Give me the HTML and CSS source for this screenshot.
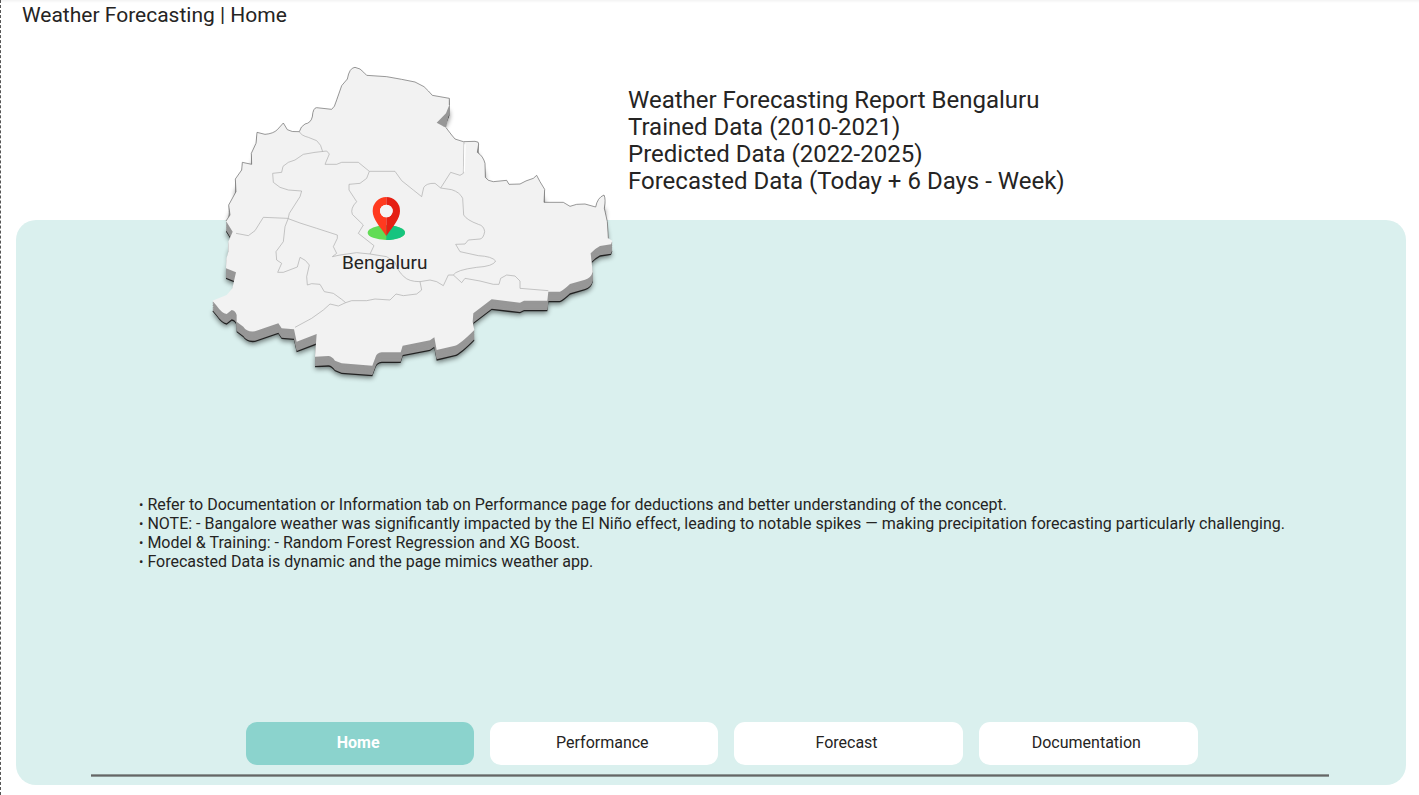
FILE: index.html
```html
<!DOCTYPE html>
<html lang="en">
<head>
<meta charset="utf-8">
<meta name="viewport" content="width=device-width, initial-scale=1">
<title>Weather Forecasting | Home</title>
<link rel="stylesheet" href="styles.css">
</head>
<body>
<div class="report">
  <header class="page-header">
    <h1 class="page-title">Weather Forecasting | Home</h1>
  </header>

  <section class="hero">
    <figure class="map">
      <svg class="map-art" viewBox="0 0 1260 990" aria-hidden="true">
        <defs>
          <path id="land" d="M465 37L480 42Q492 52 500 61L560 65L605 73L645 81L672 95Q686 108 697 121L748 130L748 150L738 175L710 203L738 218L755 240L765 252L790 260L825 259Q838 260 836 267L832 292Q850 304 855 325L856 367Q862 378 880 380L920 376L927 388L960 387Q976 377 1000 370L1010 361L1020 380L1034 403L1032 442L1090 442L1110 454L1130 448L1155 447L1187 456Q1192 428 1212 420Q1218 432 1213 460L1222 500L1225 550L1237 557L1233 568L1200 573Q1186 580 1172 595L1178 650Q1174 668 1155 674L1110 687Q1092 704 1080 710L1045 710L1042 737L972 737L960 743L875 733L820 775L818 800L823 825Q780 868 765 872L710 885L703 847L690 856L608 872L602 892L545 892Q530 894 527 905L517 932L425 925L405 917Q395 903 385 903L345 905L350 837L290 860L282 823L245 820L235 805L165 829Q140 832 130 815L110 800L110 780Q106 766 95 765L80 777Q65 774 50 752L37 737L80 720L97 700L108 652L78 640L79 612L85 590L85 560L98 530L78 498L90 480L86 450L108 410L106 372L125 345L127 322L155 328L154 295L168 265L171 232L195 238Q220 236 232 224L250 204L262 224Q274 232 298 230Q302 214 315 207Q333 204 337 185Q339 158 350 158L395 163Q404 158 410 135L425 92L442 72Q448 38 465 37Z"/>
          <filter id="shade" x="-10%" y="-10%" width="120%" height="125%">
            <feGaussianBlur stdDeviation="8"/>
          </filter>
        </defs>
        <use href="#land" class="land-shadow" filter="url(#shade)" y="38"/>
        <use href="#land" class="land-base" y="32"/>
        <g class="land-side">
          <use href="#land" y="28"/>
          <use href="#land" y="24"/>
          <use href="#land" y="19"/>
          <use href="#land" y="14"/>
          <use href="#land" y="9"/>
          <use href="#land" y="4"/>
          <path d="M748 130L750 160L738 218L710 203Z"/>
        </g>
        <use href="#land" class="land-top"/>
        <path class="rim" d="M78 498L90 480L86 450L108 410L106 372L125 345L127 322L155 328L154 295L168 265L171 232L195 238Q220 236 232 224L250 204L262 224Q274 232 298 230Q302 214 315 207Q333 204 337 185Q339 158 350 158L395 163Q404 158 410 135L425 92L442 72Q448 38 465 37L480 42Q492 52 500 61L560 65L605 73L645 81L672 95Q686 108 697 121L748 130L748 150M738 218L755 240L765 252L790 260L825 259Q838 260 836 267L832 292Q850 304 855 325L856 367Q862 378 880 380L920 376L927 388L960 387Q976 377 1000 370L1010 361L1020 380L1034 403L1032 442L1090 442L1110 454L1130 448L1155 447L1187 456Q1192 428 1212 420Q1218 432 1213 460L1222 500L1225 550"/>
        <g class="borders">
          <path d="M298 230Q304 242 325 247L350 257Q364 268 368 290"/>
          <path d="M264 492L268 475L300 425L305 408L265 405L240 397L220 382L218 355L245 352L249 334L265 322L285 315L310 298L345 292L380 288L388 297L375 328L410 328L425 322L475 322L508 349L585 349L605 377L640 405L665 425L671 398Q678 384 705 385L722 399L752 352L780 361L790 355L792 260"/>
          <path d="M722 399L755 404Q780 412 788 430L791 480Q800 495 835 508Q852 512 854 530Q850 551 840 552L805 555L795 567L767 568L780 590L835 602Q876 604 887 618Q880 634 830 637Q768 645 760 660"/>
          <path d="M264 492L255 515L250 560L228 590L230 615L245 625L233 652L250 652L292 636L300 607Q318 614 328 630L320 665L322 690L335 686L360 688L373 710L400 715L425 733L437 743"/>
          <path d="M108 535L145 542L165 527L190 487L262 490L300 504L350 520L412 540L412 550L400 575L410 595L397 605L420 600L470 593L510 597L560 605L585 622Q594 650 612 665Q626 680 660 680L690 675L710 680L730 692L745 660L760 660L785 683L795 670L840 678L880 688L897 688L902 670L920 660L945 663L960 678L960 700L1045 707"/>
          <path d="M508 349L500 370L480 385L447 388L447 405L470 440Q450 460 457 478L490 510L475 535L522 572L510 597"/>
          <path d="M285 817L335 790L370 765L390 747L415 753L437 743L455 737L500 737L525 732L570 735L588 717L610 722L650 717L665 705L660 680"/>
        </g>
        <path class="seam" d="M795 268L793 350"/>
        <ellipse class="pad-left" cx="559" cy="533" rx="56" ry="22"/>
        <path class="pad-right" d="M559 511C590 511 615 521 615 533S590 555 559 555Z"/>
        <path class="pin-left" d="M559 426A41 42 0 0 0 518 468C518 493 540 515 559 543V487A19 19 0 0 1 559 449Z"/>
        <path class="pin-right" d="M559 426A41 42 0 0 1 600 468C600 493 578 515 559 543V487A19 19 0 0 0 559 449Z"/>
        <circle class="pin-hole" cx="559" cy="468" r="19"/>
      </svg>
      <figcaption class="map-label">Bengaluru</figcaption>
    </figure>
    <div class="summary">
      <p>Weather Forecasting Report Bengaluru</p>
      <p>Trained Data (2010-2021)</p>
      <p>Predicted Data (2022-2025)</p>
      <p>Forecasted Data (Today + 6 Days - Week)</p>
    </div>
  </section>

  <main class="panel">
    <ul class="notes">
      <li>Refer to Documentation or Information tab on Performance page for deductions and better understanding of the concept.</li>
      <li>NOTE: - Bangalore weather was significantly impacted by the El Niño effect, leading to notable spikes — making precipitation forecasting particularly challenging.</li>
      <li>Model &amp; Training: - Random Forest Regression and XG Boost.</li>
      <li>Forecasted Data is dynamic and the page mimics weather app.</li>
    </ul>
    <nav class="tabs" aria-label="Pages">
      <a class="tab tab-active" href="#home" aria-current="page">Home</a>
      <a class="tab" href="#performance">Performance</a>
      <a class="tab" href="#forecast">Forecast</a>
      <a class="tab tab-last" href="#documentation">Documentation</a>
    </nav>
    <hr class="rule">
  </main>
</div>
</body>
</html>
```
FILE: styles.css
```css
* {
  box-sizing: border-box;
}

body {
  margin: 0;
  background: #fff;
  color: #252423;
  font-family: Roboto, "Liberation Sans", sans-serif;
}

p,
h1,
ul,
figure {
  margin: 0;
  padding: 0;
}

.report {
  display: flex;
  flex-direction: column;
  min-height: 100vh;
  padding: 0 13px 10px 15px;
  border-left: 1px dashed #555;
  background: linear-gradient(#f3f3f3, #fff 3px);
}

.page-header {
  padding: 3px 6px 0;
}

.page-title {
  font-size: 21px;
  font-weight: 400;
  line-height: 24px;
}

.hero {
  display: flex;
  align-items: flex-start;
  gap: 8px;
  margin-top: 28px;
  padding-left: 184px;
  position: relative;
  z-index: 1;
}

.map {
  flex: none;
  width: 420px;
  position: relative;
}

.map-art {
  display: block;
  width: 100%;
}

.map-label {
  position: absolute;
  top: 196px;
  left: 142px;
  font-size: 19px;
  line-height: 24px;
}

.land-shadow {
  fill: #000;
  opacity: 0.5;
}

.land-base {
  fill: #222;
}

.land-side {
  fill: #979797;
}

.land-top {
  fill: #f2f2f2;
}

.rim {
  fill: none;
  stroke: #666;
  stroke-width: 2;
}

.borders {
  fill: none;
  stroke: #aaa;
  stroke-width: 2;
  stroke-linejoin: round;
}

.seam {
  fill: none;
  stroke: #fff;
  stroke-width: 4;
}

.pad-left {
  fill: #62dc55;
}

.pad-right {
  fill: #16c47f;
}

.pin-left {
  fill: #ff3a1f;
}

.pin-right {
  fill: #e51f13;
}

.pin-hole {
  fill: #f4f4f4;
}

.summary {
  padding-top: 32px;
  font-size: 24px;
  line-height: 27px;
}

.panel {
  flex: 1;
  display: flex;
  flex-direction: column;
  margin-top: -165px;
  padding: 275px 77px 8px 75px;
  border-radius: 20px;
  background: #daf0ee;
}

.notes {
  padding-left: 48px;
  list-style: none;
  font-size: 16px;
  line-height: 19px;
}

.notes li {
  display: flex;
  gap: 4px;
}

.notes li::before {
  content: "•";
  font-size: 13px;
}

.tabs {
  display: flex;
  gap: 16px;
  margin-top: auto;
  padding: 0 131px 0 155px;
}

.tab {
  flex: 228 1 0;
  padding: 9px 4px 11px 0;
  border-radius: 11px;
  background: #fff;
  color: inherit;
  font-size: 16px;
  line-height: 23px;
  text-align: center;
  text-decoration: none;
}

.tab-last {
  flex-grow: 219;
}

.tab-active {
  background: #8bd3cd;
  color: #fff;
  font-weight: 700;
}

.rule {
  width: 100%;
  height: 3px;
  margin: 9px 0 0;
  border: 1px solid #8b9694;
  border-width: 1px 0;
  background: #666;
}
```
